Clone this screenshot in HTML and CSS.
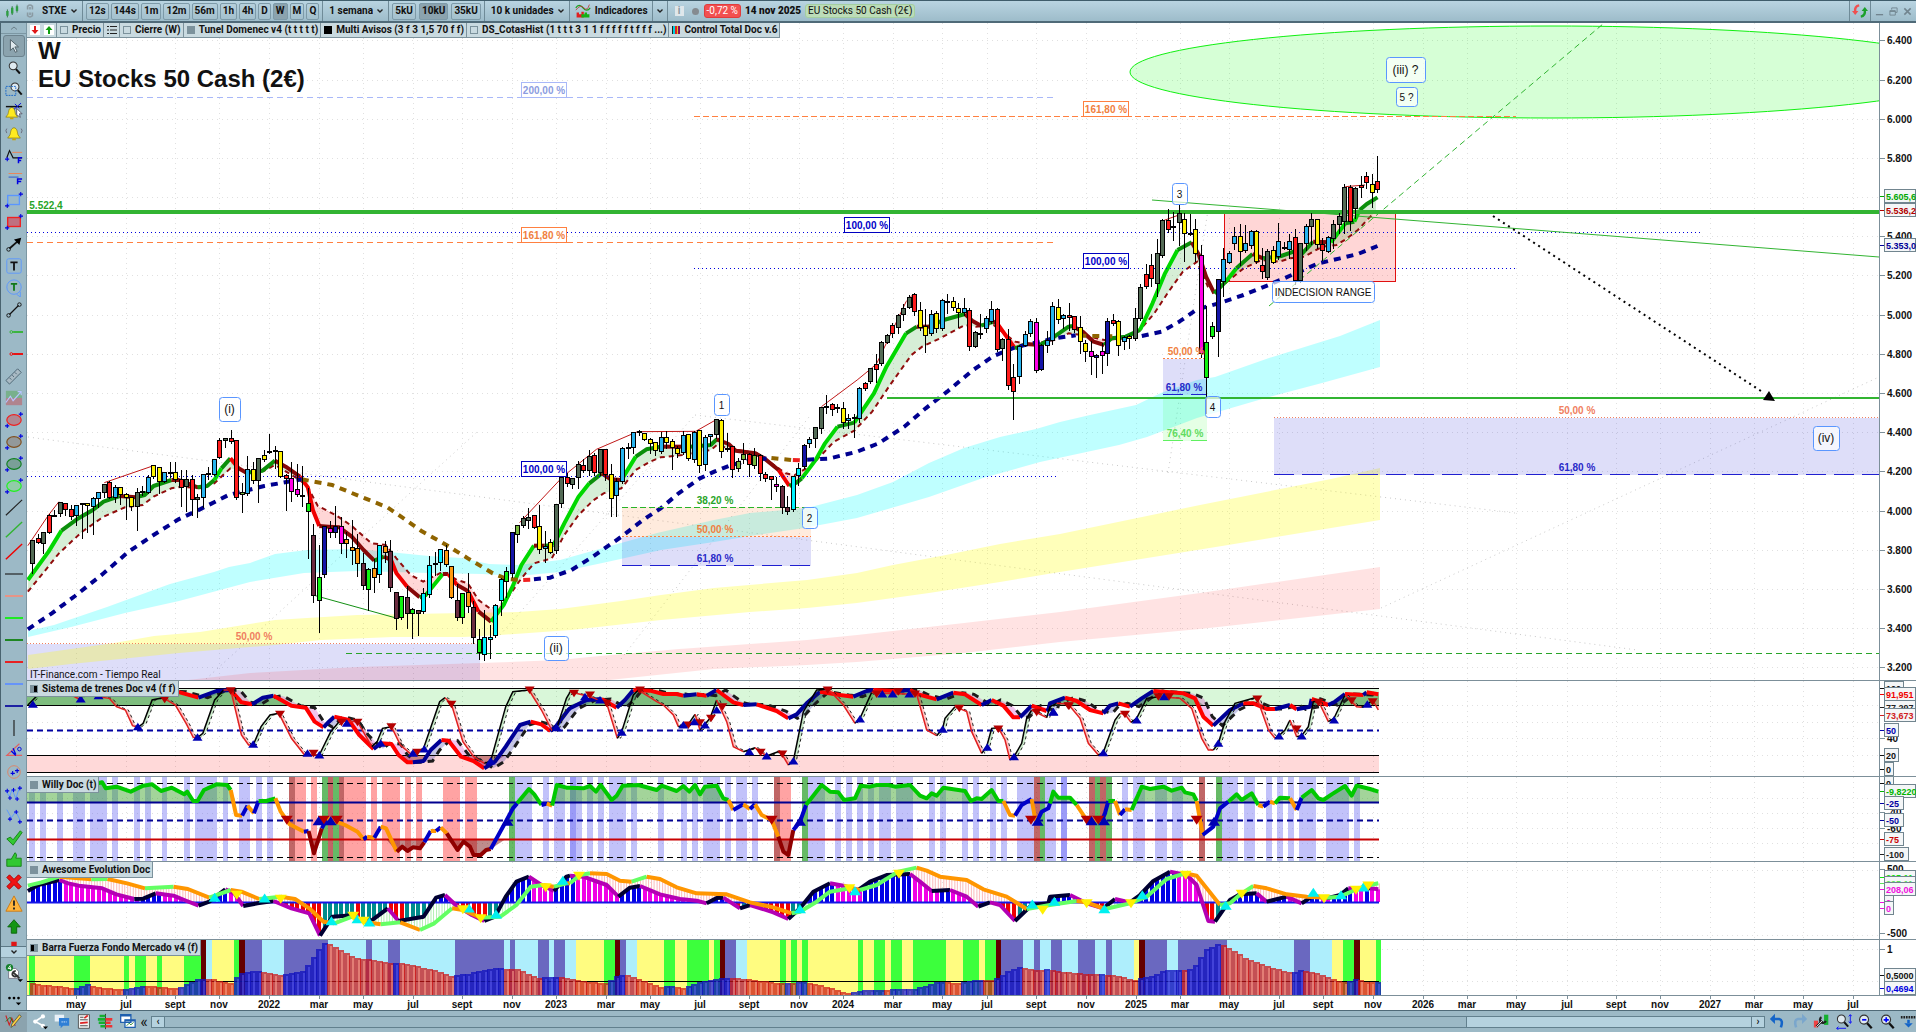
FILE: index.html
```html
<!DOCTYPE html>
<html lang="es">
<head>
  <meta charset="UTF-8">
  <meta name="viewport" content="width=device-width, initial-scale=1.0">
  <title>EU Stocks 50 Cash (2€)</title>
  <link rel="stylesheet" href="styles.css">
</head>
<body>
  <svg class="defs" aria-hidden="true">
    <symbol id="chev" viewBox="0 0 8 8"><path d="M1.5 2.5L4 5L6.5 2.5" fill="none" stroke="#222" stroke-width="1.4"/></symbol>
    <symbol id="plus" viewBox="0 0 5 5"><path d="M2.5 0V5M0 2.5H5" stroke="#0000e0" stroke-width="1.2"/></symbol>
    <symbol id="bell" viewBox="0 0 16 16"><path d="M8 1C4 2 4.500 6 3.500 9L1 12.500H15L12.500 9C11.500 6 12 2 8 1Z" fill="#ffea20" stroke="#8a7a10" stroke-width=".8"/><path d="M6 13H10V15H6Z" fill="#c9a400"/></symbol>
    <symbol id="glass" viewBox="0 0 16 16"><path d="M9.500 9.500L14.500 15" stroke="#111" stroke-width="2.400"/><circle cx="6.500" cy="6" r="4.700" fill="#dfeaf0" stroke="#333" stroke-width="1.200"/></symbol>
  </svg>

  <header class="toolbar">
    <svg class="icon logo" viewBox="0 0 20 20"><path d="M3 8V18M9 4V15M15 2V12" stroke="#1c6b2c"/><path d="M1.500 10H4.500V16H1.500ZM7.500 6H10.500V13H7.500ZM13.500 4H16.500V10H13.500Z" fill="#2f9e44"/></svg>
    <svg class="icon link" viewBox="0 0 12 20"><path d="M3 8V4Q6 1 9 4V8M3 12V16Q6 19 9 16V12M6 5V8M6 12V15" fill="none" stroke="#8a9aa2" stroke-width="2"/></svg>
    <label class="drop symbol"><select aria-label="Valor"><option>STXE</option></select><svg class="chev"><use href="#chev"/></svg></label>
    <div class="group frames">
      <button>12s</button><button>144s</button><button>1m</button><button>12m</button><button>56m</button><button>1h</button><button>4h</button><button>D</button><button class="on">W</button><button>M</button><button>Q</button>
    </div>
    <label class="drop"><select aria-label="Periodo"><option>1 semana</option></select><svg class="chev"><use href="#chev"/></svg></label>
    <div class="group"><button>5kU</button><button class="on">10kU</button><button>35kU</button></div>
    <label class="drop"><select aria-label="Unidades"><option>10 k unidades</option></select><svg class="chev"><use href="#chev"/></svg></label>
    <button class="flat indicators">
      <svg class="icon" viewBox="0 0 20 20"><path d="M1 6Q5 0 10 6T19 6" fill="none" stroke="#18a018" stroke-width="1.500"/><path d="M1 9Q7 1 11 6T18 2" fill="none" stroke="#c03030"/><path d="M2 18V12H5V14H8V11H11V18Z" fill="#e02020"/><path d="M8 18V14H12V12H15V14H18V18Z" fill="#14b014"/></svg>
      Indicadores
    </button>
    <button class="flat caret" aria-label="Más indicadores"><svg class="chev"><use href="#chev"/></svg></button>
    <div class="quote">
      <span class="info">i</span><span class="dot"></span>
      <span class="change">-0,72 %</span>
      <b>14 nov 2025</b>
      <span class="name">EU Stocks 50 Cash (2€)</span>
    </div>
    <button class="flat refresh" aria-label="Actualizar"><svg class="icon" viewBox="0 0 20 20"><path d="M9 3Q3 4 4 11" fill="none" stroke="#f05050" stroke-width="3"/><path d="M0 10H8L4 15Z" fill="#f05050"/><path d="M11 17Q17 16 16 9" fill="none" stroke="#1ca02c" stroke-width="3"/><path d="M12 10H20L16 5Z" fill="#1ca02c"/></svg></button>
    <div class="window">
      <button class="flat" aria-label="Minimizar"><svg viewBox="0 0 10 10"><path d="M1 8.500H9" stroke="#71848e" stroke-width="1.500"/></svg></button>
      <button class="flat" aria-label="Restaurar"><svg viewBox="0 0 10 10"><path d="M3 3V1H9V6H7M1 4H7V9H1ZM1 5H7" fill="none" stroke="#71848e"/></svg></button>
      <button class="flat" aria-label="Cerrar"><svg viewBox="0 0 10 10"><path d="M1.500 1.500L8.500 8.500M8.500 1.500L1.500 8.500" stroke="#71848e" stroke-width="1.700"/></svg></button>
    </div>
  </header>

  <main class="workspace">
    <nav class="tools" aria-label="Herramientas">
      <button class="scroll" aria-label="Subir"><svg viewBox="0 0 8 8"><path d="M1 5.500L4 3L7 5.500" fill="none" stroke="#6c808a"/></svg></button>
      <div class="tool-list" id="tools"></div>
      <button class="scroll down" aria-label="Bajar"><svg viewBox="0 0 8 8"><path d="M1.500 2.500L4 5L6.500 2.500" fill="none" stroke="#222" stroke-width="1.400"/></svg></button>
      <button class="tool big" aria-label="Configurar"><svg viewBox="0 0 20 20"><path d="M4 5H12L15 8V16H4Z" fill="#fff" stroke="#778"/><path d="M9 9L16 16M12 8A3 3 0 1 0 14 12" stroke="#333" fill="none" stroke-width="2"/><circle cx="5" cy="4" r="4" fill="#14802c"/><path d="M6 1.500L3.500 5H7M6 3V6.500" stroke="#fff" fill="none"/><path d="M14 17H20L17 20Z"/></svg></button>
      <button class="tool" aria-label="Más"><svg viewBox="0 0 20 20"><circle cx="5" cy="9" r="1.500"/><circle cx="10" cy="9" r="1.500"/><circle cx="15" cy="9" r="1.500"/><path d="M12 14H18L15 17Z"/></svg></button>
    </nav>

    <section class="charts">
      <div class="panel main">
        <svg class="plot" id="price"></svg><svg class="axis" id="price-axis"></svg>
        <div class="legend">
          <span class="tag arrows">
            <svg viewBox="0 0 10 10"><path d="M0 0H10V10H0Z" fill="#fff"/><path d="M4 1H6V5H8.500L5 9L1.500 5H4Z" fill="#e01818"/></svg>
            <svg viewBox="0 0 10 10"><path d="M0 0H10V10H0Z" fill="#fff"/><path d="M4 9H6V5H8.500L5 1L1.500 5H4Z" fill="#10a010"/></svg>
          </span>
          <span class="tag"><i class="box"></i>Precio</span>
          <span class="tag list"><svg viewBox="0 0 10 10"><path d="M0 1.500H2M0 5H2M0 8.500H2M3 1.500H10M3 5H10M3 8.500H10" stroke="#222" stroke-width="1.200"/></svg></span>
          <span class="tag"><i class="box"></i>Cierre (W)</span>
          <span class="tag"><i class="box grey"></i>Tunel Domenec v4 (t t t t t)</span>
          <span class="tag"><i class="box black"></i>Multi Avisos (3 f 3 1,5 70 f f)</span>
          <span class="tag"><i class="box"></i>DS_CotasHist (1 t t t 3 1 1 f f f f f t f f f ...)</span>
          <span class="tag"><i class="box multi"></i>Control Total Doc v.6</span>
        </div>
        <h1>W<br>EU Stocks 50 Cash (2€)</h1>
        <small>IT-Finance.com - Tiempo Real</small>
      </div>
      <div class="panel trains">
        <svg class="plot" id="trains"></svg><svg class="axis" id="trains-axis"></svg>
        <div class="legend"><span class="tag"><i class="box half"></i>Sistema de trenes Doc v4 (f f)</span></div>
      </div>
      <div class="panel willy">
        <svg class="plot" id="willy"></svg><svg class="axis" id="willy-axis"></svg>
        <div class="legend"><span class="tag"><i class="box grey"></i>Willy Doc (t)</span></div>
      </div>
      <div class="panel awesome">
        <svg class="plot" id="awesome"></svg><svg class="axis" id="awesome-axis"></svg>
        <div class="legend"><span class="tag"><i class="box grey"></i>Awesome Evolution Doc</span></div>
      </div>
      <div class="panel force">
        <svg class="plot" id="force"></svg><svg class="axis" id="force-axis"></svg>
        <div class="legend"><span class="tag"><i class="box half flip"></i>Barra Fuerza Fondo Mercado v4 (f)</span></div>
      </div>
      <svg class="months" id="months"></svg>
    </section>
  </main>

  <footer class="bottom">
    <button class="pencil" aria-label="Dibujar"><svg viewBox="0 0 20 20"><path d="M1 3L5 14L8 6L12 15" fill="none" stroke="#c22" stroke-width="1.300"/><path d="M1 10L6 5L10 12" fill="none" stroke="#171" /><path d="M17 2L19 4L10 15L7 17L8 13Z" fill="#ffcf40" stroke="#554"/></svg></button>
    <button aria-label="Compartir"><svg viewBox="0 0 20 20"><path d="M14 4L5 10L14 15" fill="none" stroke="#fff" stroke-width="2"/><circle cx="14" cy="4" r="2.500" fill="#fff"/><circle cx="5" cy="10" r="2.500" fill="#fff"/><circle cx="14" cy="15" r="2.500" fill="#fff"/><path d="M14 16H20L17 19Z"/></svg></button>
    <button aria-label="Chat"><svg viewBox="0 0 20 20"><path d="M2 2H13V10H2Z" fill="#e9f1f8"/><path d="M7 6H19V15H12L9 18V15H7Z" fill="#2f7fd6"/><path d="M10 10.500H16" stroke="#fff" stroke-dasharray="1.500 1"/></svg></button>
    <button aria-label="Informe"><svg viewBox="0 0 20 20"><path d="M4 2H17V18H4Z" fill="#f4f4f4" stroke="#444"/><path d="M6 5H10M6 8H15M6 15H15" stroke="#333"/><path d="M11 6L15 3M6 12L15 11" stroke="#d22" stroke-width="2"/></svg></button>
    <button aria-label="Órdenes"><svg viewBox="0 0 20 20"><path d="M10 1V19" stroke="#222"/><path d="M3 2H10V5H3ZM1 6H10V9H1ZM4 14H10V17H4ZM2 10H10V13H2Z" fill="#14b030"/><path d="M10 6H18V9H10ZM10 10H16V13H10ZM10 14H18V17H10Z" fill="#e33"/></svg></button>
    <button aria-label="Ventanas"><svg viewBox="0 0 20 20"><path d="M2 2H14V11H2ZM7 8H19V17H7Z" fill="#fff" stroke="#1f5fae" stroke-width="1.500"/><path d="M2 3H14M7 9H19" stroke="#1f5fae" stroke-width="2"/><path d="M9 15L12 12L14 14L17 11" fill="none" stroke="#171"/></svg></button>
    <button class="text">«</button>
    <div class="scrollbar">
      <button aria-label="Izquierda">‹</button>
      <div class="track"><div class="thumb"></div></div>
      <button aria-label="Derecha">›</button>
    </div>
    <button aria-label="Deshacer"><svg viewBox="0 0 20 20"><path d="M5 7H12Q17 8 14 17" fill="none" stroke="#1464c8" stroke-width="3"/><path d="M7 1V13L1 7Z" fill="#1464c8"/></svg></button>
    <button aria-label="Rehacer"><svg viewBox="0 0 20 20"><path d="M15 7H8Q3 8 6 17" fill="none" stroke="#7aa6cc" stroke-width="3"/><path d="M13 1V13L19 7Z" fill="#7aa6cc"/></svg></button>
    <button aria-label="Ajustes"><svg viewBox="0 0 20 20"><path d="M1 9H6V17H1Z" fill="#e44"/><path d="M13 2H18V14H13Z" fill="#14b030"/><path d="M4 16L11 9M10 5A3.500 3.500 0 1 0 15 9" fill="none" stroke="#222" stroke-width="2.500"/><path d="M4 16L11 9" stroke="#fff"/></svg></button>
    <button aria-label="Escala"><svg viewBox="0 0 20 20"><use href="#glass" x="1" y="1" width="16" height="16"/><path d="M2 18H13M18 2V12M2 18L4 16M2 18L4 20M18 2L16 4M18 2L20 4M18 12L16 10M18 12L20 10" fill="none" stroke="#00f"/></svg></button>
    <button aria-label="Alejar"><svg viewBox="0 0 20 20"><use href="#glass" x="1" y="1" width="18" height="18"/><path d="M6 8H11" stroke="#00f" stroke-width="2"/></svg></button>
    <button aria-label="Acercar"><svg viewBox="0 0 20 20"><use href="#glass" x="1" y="1" width="18" height="18"/><path d="M5.500 8H11.500M8.500 5V11" stroke="#00f" stroke-width="2"/></svg></button>
    <button class="last" aria-label="Anclar"><svg viewBox="0 0 20 20"><path d="M1 5H19" stroke="#222" stroke-width="3" stroke-dasharray="2 1"/><path d="M10 8V12" stroke="#1464c8" stroke-width="3"/><path d="M5 12H15L10 17Z" fill="#1464c8"/></svg></button>
  </footer>
  <script src="chart.js"></script>
</body>
</html>
```

FILE: styles.css
```css
* {
  box-sizing: border-box;
}

body {
  margin: 0;
  height: 100vh;
  display: flex;
  flex-direction: column;
  overflow: hidden;
  background: #fff;
  color: #111;
  font: bold 10px/12px Roboto, "Liberation Sans", Arial, sans-serif;
}

button, select {
  margin: 0;
  padding: 0;
  border: 0;
  background: none;
  color: inherit;
  font: inherit;
}

svg {
  display: block;
}

.defs {
  display: none;
}

/* top bar */
.toolbar {
  display: flex;
  flex: none;
  height: 23px;
  align-items: stretch;
  border-top: 1px solid #3f5d6b;
  border-bottom: 2px solid #4f6a78;
  background: linear-gradient(#b9d4e1, #9dbcca);
  white-space: nowrap;
}

.icon {
  width: 16px;
  height: 16px;
}

.logo {
  margin: 2px 0 0 5px;
}

.link {
  width: 10px;
  margin: 2px 5px 0 4px;
}

.chev {
  width: 8px;
  height: 8px;
}

.drop {
  position: relative;
  display: flex;
  align-items: center;
  gap: 3px;
  padding: 0 4px 0 6px;
  border-right: 1px solid #6f8b98;
}

.symbol {
  padding-left: 2px;
}

.drop select {
  appearance: none;
}

.group {
  display: flex;
  align-items: center;
  gap: 3px;
  padding: 0 3px;
  border-right: 1px solid #6f8b98;
}

.group button {
  height: 17px;
  padding: 0 2px;
  border: 1px solid #7d9aa8;
  border-radius: 2px;
  background: linear-gradient(#b6d0dc, #a3c0cd);
}

.frames {
  gap: 2px;
}

.group .on {
  background: #8ba3ae;
}

.flat {
  display: flex;
  align-items: center;
}

.indicators {
  gap: 4px;
  padding: 0 4px 0 5px;
  border-right: 1px solid #6f8b98;
}

.caret {
  padding: 0 3px;
  border-right: 1px solid #6f8b98;
}

.quote {
  display: flex;
  flex: 1;
  align-items: center;
  gap: 4px;
  padding-left: 7px;
}

.info {
  width: 9px;
  height: 10px;
  background: #dfe7eb;
  color: #8a979e;
  line-height: 10px;
  text-align: center;
}

.dot {
  width: 7px;
  height: 7px;
  margin: 0 1px 0 4px;
  border-radius: 50%;
  background: #858b90;
}

.change, .name {
  padding: 0 2px;
  border-radius: 3px;
  font-weight: normal;
}

.change {
  border: 1px solid #e03c3c;
  background: #f25050;
  color: #fff;
}

.name {
  border: 1px solid #a4cfa0;
  background: #bcdcb8;
}

.refresh {
  padding: 0 2px;
  border: solid #6f8b98;
  border-width: 0 1px;
}

.window {
  display: flex;
  align-items: center;
  gap: 5px;
  padding: 0 4px;
}

.window svg {
  width: 9px;
  height: 9px;
}

/* drawing tools */
.workspace {
  display: flex;
  flex: 1;
  min-height: 0;
}

.tools {
  display: flex;
  flex: none;
  flex-direction: column;
  align-items: center;
  width: 27px;
  overflow: hidden;
  border-left: 1px solid #49636f;
  border-right: 1px solid #7c97a3;
  background: #9cb9c6;
}

.scroll {
  display: grid;
  flex: none;
  place-items: center;
  width: 100%;
  height: 11px;
  border-bottom: 1px solid #7c97a3;
}

.scroll svg {
  width: 8px;
  height: 8px;
}

.down {
  height: 12px;
  border-top: 1px solid #5d7986;
  background: #b5d2df;
}

.tool-list {
  flex: 1;
  min-height: 0;
  padding-top: 1px;
  overflow: hidden;
}

.tool {
  display: grid;
  flex: none;
  place-items: center;
  width: 22px;
  height: 22px;
  border-radius: 3px;
}

.tool svg {
  width: 18px;
  height: 18px;
}

.tool:first-child {
  border: 1px solid #6c828d;
  background: #8ba3ae;
}

.big {
  height: 30px;
}

/* chart panels */
.charts {
  display: flex;
  flex: 1;
  flex-direction: column;
  min-width: 0;
}

.panel {
  position: relative;
  display: grid;
  grid-template-columns: 1fr 37px;
  flex: none;
  border-bottom: 1px solid #7c8f99;
}

.main {
  flex: 1;
  min-height: 0;
}

.trains {
  height: 96px;
}

.willy {
  height: 85px;
}

.awesome {
  height: 78px;
}

.force {
  height: 56px;
}

.plot, .axis {
  width: 100%;
  height: 100%;
  min-height: 0;
}

.axis {
  border-left: 1px solid #7c8f99;
}

.months {
  flex: none;
  width: 100%;
  height: 14px;
}

.legend {
  position: absolute;
  top: 0;
  left: 0;
  display: flex;
}

.tag {
  display: flex;
  align-items: center;
  gap: 4px;
  height: 16px;
  padding: 0 2px 0 3px;
  border: solid #7c929c;
  border-width: 0 1px 1px 0;
  background: #c9dae0;
  white-space: nowrap;
}

.main .tag {
  height: 15px;
}

.tag svg {
  width: 10px;
  height: 10px;
}

.box {
  width: 8px;
  height: 8px;
  border: 1px solid #7c929c;
}

.grey {
  background: #7c929c;
}

.black {
  border-color: #000;
  background: #000;
}

.half {
  background: linear-gradient(90deg, #7c929c 50%, #000 50%);
}

.flip {
  background: linear-gradient(90deg, #000 50%, #7c929c 50%);
}

.multi {
  border: 0;
  background: linear-gradient(90deg, #222 15%, #00d0e0 15% 35%, #e02020 35% 60%, #e0c020 60% 75%, #801060 75%);
}

.main h1 {
  position: absolute;
  top: 14px;
  left: 11px;
  margin: 0;
  font: bold 24px/28px "Liberation Sans", Arial, sans-serif;
}

.main small {
  position: absolute;
  bottom: 0;
  left: 3px;
  font-size: 10px;
  font-weight: normal;
  line-height: 10px;
}

/* bottom bar */
.bottom {
  display: flex;
  flex: none;
  height: 22px;
  align-items: center;
  gap: 3px;
  border-top: 1px solid #4f6a78;
  background: #9cb9c6;
}

.bottom > button {
  display: grid;
  place-items: center;
  width: 19px;
  height: 20px;
}

.bottom > .pencil {
  width: 27px;
  background: #8ba3ae;
}

.bottom > .last {
  width: 16px;
}

.bottom svg {
  width: 17px;
  height: 17px;
}

.bottom > .text {
  width: 8px;
  font-size: 16px;
  font-weight: normal;
}

.scrollbar {
  display: flex;
  flex: 1;
  height: 12px;
  border: 1px solid #62808e;
}

.scrollbar button {
  width: 12px;
  background: #b5d2df;
  line-height: 10px;
}

.track {
  display: flex;
  flex: 1;
  justify-content: flex-end;
  border: solid #62808e;
  border-width: 0 1px;
}

.thumb {
  width: 18%;
  border-left: 1px solid #62808e;
  background: #b5d2df;
}

/* svg text */
text {
  fill: #111;
  font: bold 10px "Liberation Sans", Arial, sans-serif;
}

.value {
  font-size: 9px;
}

.fib {
  text-anchor: middle;
}

.note {
  font-weight: normal;
  text-anchor: middle;
}

.wave {
  font-size: 12px;
}
```

FILE: chart.js
```js
const NS = 'http://www.w3.org/2000/svg';
const FAR = 6000;      // past the right edge of any window
const STEP = 5.514;    // width of one week
const FIRST = 32.5;
const LAST = 1379;

function add(parent, tag, attrs, text) {
  const node = document.createElementNS(NS, tag);
  for (const key in attrs) node.setAttribute(key, attrs[key]);
  if (text !== undefined) node.textContent = text;
  parent.appendChild(node);
  return node;
}

// Series are stored in blocks: x start, y start, x units and y units per pixel
const BLOCKS = {
  a: [0, 400, 2.8, 3], b: [500, 380, 2.8, 3], c: [840, 180, 2.8, 3],
  d: [20, 675, 2.8, 3], e: [570, 675, 3, 3], f: [1050, 675, 3, 3]
};

function pts(block, str) {
  const [x0, y0, kx, ky] = BLOCKS[block];
  return str.trim().split(/\s+/).map(p => {
    const [x, y] = p.split(',').map(Number);
    return [x0 + x / kx, y0 + y / ky];
  });
}

function series(obj) {
  return Object.keys(obj).flatMap(k => pts(k, obj[k])).sort((p, q) => p[0] - q[0]);
}

function at(list, x) {
  if (x <= list[0][0]) return list[0][1];
  for (let i = 1; i < list.length; i++) {
    const [x1, y1] = list[i - 1], [x2, y2] = list[i];
    if (x <= x2) return x2 === x1 ? y2 : y1 + (y2 - y1) * (x - x1) / (x2 - x1);
  }
  return list[list.length - 1][1];
}

function layer(id, top) {
  return add(document.getElementById(id), 'g', { transform: `translate(-27,-${top})` });
}

function poly(g, list, color, width, extra) {
  return add(g, 'polyline', { points: list.map(p => p.join()).join(' '), fill: 'none', stroke: color, 'stroke-width': width, ...extra });
}

function hline(g, y, x1, x2, color, width, dash) {
  add(g, 'line', { x1, x2, y1: y, y2: y, stroke: color, 'stroke-width': width || 1, 'stroke-dasharray': dash || 'none', 'shape-rendering': width > 1 ? 'auto' : 'crispEdges' });
}

function line(g, x1, y1, x2, y2, color, dash, width) {
  add(g, 'line', { x1, y1, x2, y2, stroke: color, 'stroke-width': width || 1, 'stroke-dasharray': dash || 'none' });
}

function rect(g, x, y, width, height, fill, extra) {
  add(g, 'rect', { x, y, width, height, fill, ...extra });
}

// Draws runs of equal colour as one line each
function coloured(g, list, pick, width, extra) {
  let run = [list[0]], color = null;
  for (let i = 1; i < list.length; i++) {
    const c = pick(list[i - 1], list[i]);
    if (color && c !== color) {
      poly(g, run, color, width, extra);
      run = [list[i - 1]];
    }
    color = c;
    run.push(list[i]);
  }
  poly(g, run, color, width, extra);
}

function cloud(g, a, b, above, below, from, to) {
  let run = [], sign = 0;
  const flush = () => {
    if (run.length > 1) {
      const shape = run.map(p => `${p[0]},${p[1]}`).concat(run.slice().reverse().map(p => `${p[0]},${p[2]}`));
      add(g, 'polygon', { points: shape.join(' '), fill: sign < 0 ? above : below });
    }
  };
  for (let x = from; x <= to; x += 2) {
    const ya = at(a, x), yb = at(b, x), s = ya < yb ? -1 : 1;
    if (s !== sign) {
      flush();
      run = [];
      sign = s;
    }
    run.push([x, ya, yb]);
  }
  flush();
}

function triangles(g, block, dir, color, size, str) {
  pts(block, str).forEach(([x, y]) => {
    const h = size * dir;
    add(g, 'path', { d: `M${x - size} ${y + h * .7}H${x + size}L${x} ${y - h * .8}Z`, fill: color });
  });
}

function bands(g, block, top, height, color, str) {
  const [x0, , k] = BLOCKS[block];
  str.split(' ').forEach(s => {
    const [a, b] = s.split('-').map(Number);
    rect(g, Math.round(x0 + a / k), top, Math.round((b - a) / k), height, color);
  });
}

const MONTHS = [[76, 'may'], [126, 'jul'], [175, 'sept'], [219, 'nov'], [269, '2022'], [319, 'mar'], [363, 'may'], [413, 'jul'], [462, 'sept'], [512, 'nov'], [556, '2023'], [606, 'mar'], [650, 'may'], [700, 'jul'], [749, 'sept'], [799, 'nov'], [843, '2024'], [893, 'mar'], [942, 'may'], [987, 'jul'], [1036, 'sept'], [1086, 'nov'], [1136, '2025'], [1180, 'mar'], [1229, 'may'], [1279, 'jul'], [1323, 'sept'], [1373, 'nov'], [1423, '2026'], [1467, 'mar'], [1516, 'may'], [1567, 'jul'], [1616, 'sept'], [1660, 'nov'], [1710, '2027'], [1754, 'mar'], [1803, 'may'], [1853, 'jul']];

function grid(g, rows, top, bottom) {
  MONTHS.forEach(([x]) => add(g, 'line', { x1: x + .5, x2: x + .5, y1: top, y2: bottom, stroke: '#e0e0e0', 'stroke-dasharray': '1 4' }));
  rows.forEach(y => hline(g, y + .5, 27, FAR, '#e0e0e0', 1, '1 4'));
}

function axis(id, top, labels) {
  const g = add(document.getElementById(id), 'g', { transform: `translate(0,-${top})` });
  labels.forEach(([y, text, color, boxed]) => {
    hline(g, y + .5, 0, 5, boxed ? color : '#7c8f99');
    if (boxed) rect(g, 4.5, y - 6.5, Math.min(text.length * 5 + 4, 31), 13, '#f4f6f7', { stroke: '#71858f' });
    add(g, 'text', { class: boxed ? 'value' : 'tick', x: boxed ? 6 : 7, y: y + 4, style: `fill:${color || '#111'}` }, text);
  });
}

/* ---------- price ---------- */
const CANDLE = { g: '#546b56', r: '#ff1c1c', b: '#29b4ee', y: '#fff200', k: '#000', m: '#ff00e6', n: '#1414a8', l: '#10f010', o: '#ff9a10', w: '#6b2c40', c: '#00f2ff', v: '#78b83c' };
// body top, body bottom, high, low for each week
const WEEKS = [
  ['a', 'g420,490,420,520 r415,427,400,430 g397,430,392,460 r346,397,340,400 k345,347,328,348 g307,340,305,348 r310,328,308,345 r328,349,312,358 b314,346,311,375 k308,310,305,415 y310,314,305,397 b295,318,288,402 b276,295,273,322 g251,275,248,290 r246,292,240,295 b260,290,253,305 y260,282,258,313 y283,290,275,356 y290,318,288,330 g275,318,260,390 k272,275,256,285 b230,275,222,280 y196,229,192,235 y200,243,198,280 b216,244,214,247 k215,218,183,230 y217,236,184,245 r236,262,206,318 g238,258,206,334 r236,298,222,345 g290,297,280,352 b223,290,221,322 k218,222,198,238 b176,223,174,225 r120,172,112,174 g114,120,110,140 r113,122,88,130 r120,292,118,297 v275,283,245,335 b208,280,166,285 y208,240,183,250 g175,241,170,307 y166,178,146,182 b152,156,100,160 k150,153,135,205 y152,227,150,230 r226,235,220,330 m235,274,182,302 m268,283,190,288 k285,288,195,318 l308,333,260,475 w406,586,368,607 l532,600,432,695 n378,522,374,530 m384,396,360,410 n377,397,316,410 m377,428,348,458 o416,430,392,470 o442,450,358,492 o445,490,400,527 w488,556,455,568 l508,568,502,630 o505,531,473,577 c436,523,432,545 o437,457,420,487 w454,562,418,573 w577,655,573,686 l588,652,585,656 w590,640,555,683 l628,640,620,713 w631,639,627,704 c580,634,560,640 c494,583,465,590 k488,492,453,525 c448,487,445,510 o449,493,433,497 o499,592,495,595 w600,650,548,660 l580,652,576,668 o577,619,516,637 w622,712,600,728 l718,757,685,777 c710,761,628,780 c712,717,672,774 c614,706,610,710 c538,601,530,645 l512,544,498,592 n397,520,392,530 v376,402,372,425 g355,374,345,380 g352,360,320,385 r346,382,342,385'],
  ['b', 'y438,507,372,518 b497,503,450,545 y487,516,475,520 g373,511,370,520 g290,370,285,380 r291,310,275,318 g293,313,290,325 g252,292,240,323 r256,271,235,275 g227,271,208,285 r225,275,215,285 g206,277,203,285 r208,282,204,300 y283,355,250,408 b302,346,290,408 b203,303,198,310 y200,205,186,235 b157,200,153,220 k153,156,148,165 y159,178,155,180 y178,190,172,220 y187,210,182,225 b170,212,152,220 y170,186,150,205 y182,200,173,268 y203,220,195,230 b166,217,150,222 y163,235,160,240 b155,236,150,245 y151,254,146,277 b170,252,163,270 b163,168,160,195 g118,163,114,175 y119,214,115,230 b203,208,157,213 r197,268,195,290 v242,265,232,272 v223,237,187,250 r221,253,215,287 v224,255,200,263 r225,280,220,300 r282,295,272,303 r288,296,285,358 m313,318,288,332 w317,380,313,400 w380,394,345,402 c287,388,285,392 c263,285,245,315 n194,259,188,265 b176,190,168,200 g140,175,138,200 g82,143,78,160 r77,82,42,98 r73,88,66,105 k82,85,68,97 y83,125,62,143 b113,120,100,145 k112,115,100,170 b23,113,18,125 r8,23,4,30'],
  ['c', 'g565,604,560,610 r553,566,520,605 g485,550,480,555 g464,485,460,490 r436,460,425,470 g405,440,398,460 g385,402,370,420 g352,381,343,385 r343,394,335,405 y391,442,362,450 y437,466,385,515 b401,460,388,465 y398,445,390,455 b361,445,355,450 y362,366,338,400 y364,382,348,390 y383,396,365,440 b383,395,350,405 r391,498,382,510 g457,498,450,502 k459,461,398,475 b415,443,405,455 b388,424,360,428 r386,507,382,512 g478,505,470,540 r476,616,445,628 r590,633,550,716 b497,588,492,608 b463,495,450,498 b424,460,415,468 m425,570,410,575 n496,567,490,570 b481,496,450,515 b379,481,363,492 y380,417,355,430 b406,414,400,445 r406,410,367,450 r409,447,405,455 y440,484,405,520 y490,513,478,543 m512,528,480,583 n524,530,518,590 m514,526,487,578 n422,520,410,555 r421,428,398,435 y424,495,418,525 b470,482,465,508 y467,475,462,505 g415,475,382,480 g320,414,310,420 r283,319,250,325 r256,295,218,317 g220,310,175,348 g121,225,115,230 r121,147,83,155 k137,140,92,180 g100,125,72,195 y118,160,95,243 k160,162,100,165 y148,219,113,243 m225,520,192,530 l485,592,375,700 l438,468,422,475 n297,454,293,528 b237,303,200,348 b219,245,210,250 b167,190,138,207 y169,212,130,255 b190,210,132,215 b154,195,148,205 y152,243,148,248 r256,273,200,295 g212,292,205,298 y209,247,195,250 b184,228,127,238 y200,205,182,208 b184,207,158,233 r172,300,143,313 g190,300,187,305 b139,190,128,210 g118,137,97,193 y118,192,115,205 r193,210,170,240 b172,213,165,215 g132,173,118,205 g107,133,95,160 g22,122,10,160 r20,124,12,150 g25,85,18,115 r14,20,-15,52 r-12,5,-28,25 y12,37,-20,80 r2,28,-75,35']
];

const EMA = series({
  a: '78,540 136,455 172,392 215,358 260,330 290,305 335,288 380,292 405,285 430,258 480,240 500,240 525,250 553,262 580,258 600,240 620,205 645,175 668,205 690,218 735,212 770,182 800,200 840,230 862,262 876,330 894,378 920,380 950,382 985,410 1018,450 1048,482 1075,470 1095,480 1110,520 1140,560 1175,592 1190,588 1215,555 1240,522 1255,522 1280,555 1310,573 1340,635 1375,665',
  b: '10,675 35,620 60,555 95,497 125,497 150,495 180,430 220,350 250,310 285,280 310,298 340,300 360,265 380,230 410,208 450,200 490,200 530,200 590,195 607,178 640,192 660,212 715,220 740,235 780,270 810,318 830,308 845,295 885,238 910,190 945,140',
  c: '40,728 95,640 130,560 185,460 215,440 250,440 290,420 350,402 370,422 395,437 430,425 440,430 470,475 490,505 520,492 560,495 600,470 640,440 650,438 680,455 710,485 740,495 760,475 800,470 840,450 875,370 910,280 945,210 985,187 1005,225 1025,290 1048,340 1080,305 1110,265 1155,222 1185,235 1235,228 1270,215 1290,225 1325,185 1375,187 1415,130 1440,125 1455,90 1475,72 1505,52'
});
const SIGNAL = series({
  a: '78,575 120,520 165,460 230,395 290,350 350,322 400,315 430,290 480,265 510,260 560,265 600,250 645,205 690,218 740,212 770,195 840,240 862,262 890,318 940,345 985,378 1040,430 1080,435 1110,475 1150,525 1185,545 1240,515 1280,540 1310,550 1340,600 1375,628 1410,610',
  b: '60,595 95,550 145,535 180,465 220,405 260,362 290,340 340,325 380,270 420,245 450,232 510,225 590,210 607,195 640,205 720,220 760,250 800,280 825,285 870,258 900,225 935,185',
  c: '40,752 90,695 140,615 200,525 230,500 280,475 350,435 380,440 430,435 490,485 530,492 560,487 600,480 640,460 680,465 740,480 800,475 840,450 880,400 920,335 960,275 1000,245 1030,320 1050,335 1090,300 1130,265 1180,240 1230,245 1260,235 1300,230 1350,200 1390,195 1420,175 1450,150 1480,115 1500,95'
});

function drawPrice() {
  const g = layer('price', 23);
  const rows = [40, 80, 119, 158, 197, 236, 275, 315, 354, 393, 432, 471, 511, 550, 589, 628, 667];
  grid(g, rows, 23, 681);
  const dim = 'rgba(120,120,120,.4)';
  [[28, 437, 1637, 650], [695, 415, 1515, 513], [206, 679, 477, 432], [500, 635, 695, 415], [621, 659, 809, 417], [1168, 473, 1208, 210], [1381, 608, 1879, 377]]
    .forEach(l => line(g, ...l, dim, '1 4'));

  // zones
  add(g, 'ellipse', { cx: 1551, cy: 72, rx: 421, ry: 46, fill: 'rgba(0,255,0,.16)', stroke: '#10f010', 'stroke-width': 1 });
  rect(g, 27, 644, 453, 36, 'rgba(60,60,220,.17)');
  add(g, 'polygon', { fill: 'rgba(0,255,255,.25)', points: '28,631 54,625 107,607 170,584 214,572 229,567 250,563 275,554 307,550 357,549 389,552 429,556 461,558 489,564 518,565 560,560 621,543 657,533 714,520 750,513 807,508 857,495 893,482 929,463 964,448 1000,437 1036,429 1060,422 1090,415 1136,405 1161,393 1197,380 1215,377 1269,358 1340,336 1380,320 1380,367 1322,383 1269,397 1197,418 1147,437 1119,445 1040,462 983,478 929,497 857,518 804,528 750,536 714,542 661,550 607,562 560,572 518,576 482,574 429,573 357,571 304,573 250,582 179,601 125,613 71,627 28,637' });
  add(g, 'polygon', { fill: 'rgba(255,255,0,.27)', points: '28,655 71,649 114,643 154,636 200,632 275,620 307,618 357,615 464,613 518,612 560,609 621,601 661,595 714,588 807,580 857,573 893,565 946,555 1000,544 1060,534 1200,505 1331,479 1380,468 1380,520 1222,546 1060,572 1000,582 929,593 857,603 807,608 750,612 661,620 571,630 500,635 464,637 393,637 321,640 275,645 179,653 71,664 28,669' });
  add(g, 'polygon', { fill: 'rgba(255,0,0,.11)', points: '179,681 250,673 357,667 480,663 560,660 589,657 679,649 807,640 857,635 964,623 1060,612 1200,593 1380,567 1380,609 1200,629 1060,642 964,653 857,662 807,665 714,669 600,681' });
  rect(g, 622, 507, 189, 30, 'rgba(255,120,30,.15)');
  rect(g, 622, 537, 189, 29, 'rgba(60,60,220,.17)');
  rect(g, 1163, 359, 44, 36, 'rgba(60,60,220,.17)');
  rect(g, 1163, 395, 44, 46, 'rgba(0,255,0,.1)');
  rect(g, 1274, 418, FAR, 57, 'rgba(60,60,220,.17)');
  rect(g, 1224.5, 213.5, 171, 68, 'rgba(255,0,0,.16)', { stroke: '#e01010' });

  cloud(g, EMA, SIGNAL, 'rgba(0,150,0,.16)', 'rgba(255,0,0,.16)', 28, 1377);
  poly(g, SIGNAL, '#900c0c', 2, { 'stroke-dasharray': '5 4' });
  coloured(g, EMA, (p, q) => {
    const slope = (q[1] - p[1]) / (q[0] - p[0]);
    if (slope < 0) return slope < -1.2 ? '#00d800' : '#0a8f0a';
    return slope > 1.2 && p[0] < 1190 ? '#f00000' : '#860808';
  }, 4, { 'stroke-linejoin': 'round' });
  [
    ['#000090', pts('a', '78,688 145,640 210,588 290,520 360,455 430,405 500,358 560,328 640,285 740,258 845,238')],
    ['#8f6400', pts('a', '845,238 930,255 1010,290 1085,322 1130,355 1180,393 1250,435 1310,475 1380,520 1420,537 1465,540')],
    ['#f02020', pts('a', '1465,540 1490,539')],
    ['#000090', pts('b', '95,598 140,593 200,570 260,530 340,470 400,420 450,385 500,340 560,295 600,275 640,258 700,240 760,234')],
    ['#8f6400', pts('b', '760,234 815,240')],
    ['#f02020', pts('b', '820,240 845,241')],
    ['#000090', pts('b', '860,239 920,236 1000,215 1060,190').concat(pts('c', '180,740 240,685 300,635 370,572 430,528 490,502 540,490 600,475 660,466'))],
    ['#8f6400', pts('c', '670,467 770,469')],
    ['#000090', pts('c', '845,468 900,455 950,425 1000,388 1060,370 1130,345 1200,315 1280,278 1340,250 1400,235 1450,222 1505,198')]
  ].forEach(([color, list]) => poly(g, list, color, 4, { 'stroke-dasharray': '7 6' }));

  // levels
  hline(g, 97.5, 27, 1057, '#a9b8f8', 1, '6 4');
  hline(g, 116.5, 694, 1516, '#ff8040', 1, '6 3');
  hline(g, 232.5, 27, 1702, '#0000e0', 1, '1 3');
  hline(g, 242.5, 27, 1056, '#ff8040', 1, '6 4');
  hline(g, 268.5, 694, 1516, '#0000e0', 1, '1 3');
  hline(g, 476.5, 27, 1057, '#0000e0', 1, '1 3');
  hline(g, 643.5, 27, 480, '#f08060', 1, '1 2');
  hline(g, 653.5, 346, FAR, '#28a428', 1, '6 4');
  hline(g, 507.5, 622, 811, '#28b428', 1, '6 3');
  hline(g, 536.5, 622, 811, '#ff8040', 1, '2 2');
  hline(g, 565.5, 622, 811, '#2020d0', 1, '20 8');
  hline(g, 358.5, 1163, 1207, '#ff8040', 1, '2 2');
  hline(g, 394.5, 1163, 1207, '#2020d0', 1, '20 8');
  hline(g, 440.5, 1163, 1207, '#60f060', 1, '20 8');
  hline(g, 417.5, 1274, FAR, '#f08060', 1, '1 2');
  hline(g, 474.5, 1274, FAR, '#2020d0', 1, '20 8');
  hline(g, 212, 27, FAR, '#32b432', 4);
  hline(g, 398, 887, FAR, '#32b432', 2);
  line(g, 1152, 200, 1879, 257, '#32b432');
  line(g, 1269, 306, 1603, 24, '#32b432', '6 4');
  line(g, 313, 595, 396, 618, '#149014');

  const red = '#c01818';
  poly(g, pts('a', '78,437 136,345 165,305'), red, 1);
  poly(g, pts('a', '292,248 430,197'), red, 1);
  poly(g, pts('b', '55,428 176,290 270,208 385,155 548,154 607,118'), red, 1);
  poly(g, pts('b', '900,80 1000,0 1040,-35 1055,-50 1137,-235 1155,-255'), red, 1);
  poly(g, pts('c', '905,122 954,103'), red, 1);
  poly(g, pts('c', '1415,20 1470,15'), red, 1);

  let week = 0;
  WEEKS.forEach(([block, str]) => {
    const y0 = BLOCKS[block][1];
    str.split(' ').forEach(s => {
      const x = Math.round(FIRST + STEP * week++ - .5) + .5;
      const [top, bottom, high, low] = s.slice(1).split(',').map(v => Math.round(y0 + v / 3) + .5);
      add(g, 'line', { x1: x, x2: x, y1: high, y2: low, stroke: '#000', 'shape-rendering': 'crispEdges' });
      rect(g, x - 2, top, 4, Math.max(bottom - top, 1), CANDLE[s[0]], { stroke: '#000', 'shape-rendering': 'crispEdges' });
    });
  });

  line(g, 1493, 216, 1764, 393, '#000', '2 4', 2);
  add(g, 'path', { d: 'M1775 401L1763 400L1769 391Z' });

  // fibonacci captions
  [[254, 640, '50,00 %', '#f08060'], [715, 504, '38,20 %', '#28a428'], [715, 533, '50,00 %', '#f08040'], [715, 562, '61,80 %', '#2828c8'],
    [1186, 355, '50,00 %', '#f08040'], [1184, 391, '61,80 %', '#2828c8'], [1185, 437, '76,40 %', '#60dc60'],
    [1577, 414, '50,00 %', '#f08060'], [1577, 471, '61,80 %', '#2828c8'], [46, 209, '5.522,4', '#28a428']]
    .forEach(([x, y, t, c]) => add(g, 'text', { class: 'fib', x, y, style: `fill:${c}` }, t));
  [[521, 82, '200,00 %', '#a9b8f8', '#8c9ce0'], [1083, 101, '161,80 %', '#ff8040', '#f08040'], [844, 217, '100,00 %', '#0000c0', '#0000c8'], [521, 227, '161,80 %', '#ff8040', '#f08040'],
    [1083, 253, '100,00 %', '#0000c0', '#0000c8'], [521, 461, '100,00 %', '#0000c0', '#0000c8']]
    .forEach(([x, y, t, border, c]) => {
      rect(g, x + .5, y + .5, 45, 15, '#fff', { stroke: border });
      add(g, 'text', { class: 'fib', x: x + 23, y: y + 12, style: `fill:${c}` }, t);
    });
  [[1386, 57, 39, 25, '(iii) ?', 1], [1396, 87, 21, 19, '5 ?'], [219, 397, 21, 24, '(i)', 1], [544, 636, 24, 24, '(ii)', 1], [714, 394, 15, 21, '1'], [802, 507, 15, 21, '2'],
    [1172, 183, 15, 21, '3'], [1205, 396, 15, 21, '4'], [1272, 281, 102, 21, 'INDECISION RANGE'], [1813, 426, 26, 24, '(iv)', 1]]
    .forEach(([x, y, w, h, t, big]) => {
      rect(g, x + .5, y + .5, w, h, 'rgba(255,255,255,.7)', { rx: 3, stroke: '#5a96ff' });
      add(g, 'text', { class: big ? 'note wave' : 'note', x: x + w / 2, y: y + h / 2 + 4 }, t);
    });

  axis('price-axis', 23, [
    ...rows.map((y, i) => [y, ((6400 - i * 200) / 1000).toFixed(3)]).filter(r => r[1] !== '5.600'),
    [196, '5.605,6', '#00a800', 1], [210, '5.536,2', '#b00000', 1], [245, '5.353,0', '#000098', 1]
  ]);
}

/* ---------- trains ---------- */
const THICK = series({
  d: '22,60 100,48 200,50 300,48 440,50 500,68 550,48 590,45 620,82 650,88 680,68 710,62 760,92 800,98 825,140 850,157 865,140 880,125 920,135 950,180 990,222 1010,205 1040,207 1060,240 1085,262 1100,262 1130,258 1150,225 1180,195 1200,197 1235,245 1270,258 1300,280 1330,260 1360,215 1400,150 1430,140 1460,148 1485,168 1500,155 1535,105',
  e: '0,100 50,75 95,72 140,98 165,75 190,45 240,47 280,57 320,57 340,62 380,58 410,62 440,45 490,82 520,90 560,88 620,108 655,130 680,118 710,85 750,50 810,60 850,65 890,48 910,45 980,48 1020,45 1045,58 1100,73 1150,53 1185,58 1235,90 1265,75 1300,92 1330,127 1350,127 1385,92 1430,108 1435,104',
  f: '0,85 45,68 80,78 120,105 160,115 180,92 205,85 240,95 275,70 310,48 400,55 435,70 460,125 490,152 540,105 580,85 610,85 650,102 675,102 720,90 740,103 780,95 785,72 835,90 855,80 885,57 940,60 950,52 985,58'
});
const FAST = series({
  d: '22,90 50,60 140,58 165,72 180,60 250,70 270,95 295,105 315,152 330,157 345,145 370,75 400,68 435,90 465,145 485,187 497,188 512,175 545,75 570,45 590,45 620,180 640,210 653,210 675,155 700,120 725,115 760,190 795,238 838,240 870,170 895,138 945,140 985,215 1000,200 1015,160 1040,155 1065,210 1095,238 1130,220 1175,80 1190,68 1208,88 1240,200 1270,245 1300,265 1318,258 1360,95 1380,50 1425,45 1460,105 1490,168 1503,158 1530,70 1538,55',
  e: '0,50 60,65 110,85 142,190 155,170 190,60 205,45 260,80 280,90 310,120 325,155 340,150 350,155 375,118 390,165 420,130 440,75 470,140 490,215 520,230 555,218 570,230 590,243 630,228 655,270 670,258 700,110 740,45 775,43 820,90 855,145 870,130 905,52 920,55 1040,58 1070,165 1100,182 1118,160 1125,130 1155,95 1190,110 1205,170 1235,235 1250,215 1265,160 1285,158 1305,195 1320,255 1332,245 1355,205 1370,130 1385,105 1430,128',
  f: '0,95 20,85 55,88 90,130 115,205 145,240 160,232 195,135 210,115 225,118 243,142 260,130 290,70 325,65 390,70 425,100 455,190 475,225 490,225 505,205 525,140 555,85 620,67 655,165 675,190 687,182 705,165 720,135 740,185 755,182 775,155 790,80 805,78 835,140 852,130 885,60 920,95 935,97 952,88 968,75 985,105'
});

function drawTrains() {
  const g = layer('trains', 681);
  grid(g, [705, 722, 738, 755], 681, 776);
  rect(g, 27, 689, LAST - 27, 17, 'rgba(0,200,0,.15)');
  rect(g, 27, 756, LAST - 27, 17, 'rgba(255,0,0,.15)');
  const clampTop = THICK.map(([x, y]) => [x, Math.min(y, 705)]);
  const base = [[27, 705], [LAST, 705]];
  cloud(g, clampTop, base, 'rgba(0,110,0,.42)', 'none', 27, LAST);
  const clampLow = THICK.map(([x, y]) => [x, Math.max(y, 755)]);
  cloud(g, [[27, 755], [LAST, 755]], clampLow, 'rgba(120,0,0,.4)', 'none', 27, LAST);
  const slow = THICK.map(([x, y]) => [x + 9, y]).filter(p => p[0] <= LAST);
  const lag = FAST.map(([x, y]) => [x + 3, y]).filter(p => p[0] <= LAST);
  cloud(g, THICK, slow, 'rgba(30,30,160,.25)', 'rgba(210,60,200,.3)', 27, LAST);
  cloud(g, FAST, lag, 'rgba(0,160,0,.2)', 'rgba(255,60,60,.3)', 27, LAST);
  hline(g, 730.5, 27, LAST, '#0000a0', 2, '6 4');
  [688.5, 705.5, 755.5, 772.5].forEach(y => hline(g, y, 27, LAST, '#000'));
  poly(g, slow, '#1c1c1c', 3, { 'stroke-dasharray': '7 6' });
  coloured(g, THICK, (p, q) => q[1] < p[1] ? '#000096' : '#ff0000', 4, { 'stroke-linejoin': 'round' });
  poly(g, lag, '#222', 1, { 'stroke-dasharray': '3 3' });
  coloured(g, FAST, (p, q) => q[1] < p[1] ? '#000' : '#e02020', 1.5);
  triangles(g, 'd', -1, '#b40000', 5, '590,47 405,73 728,118 822,235 900,142 945,142 1040,155 1112,232 1208,88 1427,45');
  triangles(g, 'd', 1, '#0000b4', 5, '36,88 170,72 220,62 330,155 497,187 653,208 805,235 838,240 915,145 1010,205 1100,235 1132,222 1318,258 1503,158');
  triangles(g, 'e', -1, '#b40000', 5, '12,55 60,60 110,85 210,45 355,150 390,143 423,130 457,95 572,232 637,237 773,45 920,57 985,50 1035,57 1168,100 1285,162 1400,112 1495,92');
  triangles(g, 'e', 1, '#0000b4', 5, '45,65 90,75 155,172 340,150 373,140 405,150 440,105 538,230 590,243 670,258 870,132 937,57 968,57 1018,57 1118,163 1252,217 1332,245 1450,112');
  triangles(g, 'f', -1, '#b40000', 5, '57,93 225,118 325,65 357,65 622,72 740,162 805,82 905,77 968,80');
  triangles(g, 'f', 1, '#0000b4', 5, '10,110 160,233 260,135 342,65 505,205 687,183 755,183 852,135 952,88');
  axis('trains-axis', 681, [[688, '100', '#111', 1], [738, '40'], [694, '91,951', '#f00000', 1], [707, '77,297', '#222', 1], [715, '73,673', '#d02020', 1], [730, '50', '#0000b0', 1], [755, '20', '#111', 1], [769, '0', '#111', 1]]);
}

/* ---------- willy ---------- */
const WILLY = series({
  d: '22,330 100,325 170,335 230,322 240,340 270,335 310,350 345,332 370,328 395,348 425,338 460,358 468,350 485,378 497,378 515,345 550,328 580,330 590,345 605,420 622,422 637,392 655,415 668,378 690,378 715,370 730,410 755,448 795,470 808,468 823,535 845,460 860,430 885,440 910,450 945,470 962,493 972,485 992,488 1010,455 1025,460 1055,530 1070,515 1085,528 1100,517 1120,520 1132,502 1150,468 1165,468 1178,457 1195,475 1225,525 1242,500 1260,515 1270,540 1290,540 1305,525 1318,522 1360,440 1380,400 1392,385 1425,342 1440,358 1460,390 1475,386 1490,392 1503,330 1530,338',
  e: '0,338 40,340 60,333 78,350 92,330 125,375 140,362 158,332 205,330 260,345 275,332 320,348 340,333 358,350 375,330 390,358 405,335 440,332 460,370 475,375 490,405 520,388 540,402 555,388 575,420 605,435 625,485 640,530 655,540 670,465 690,440 708,390 755,330 780,350 805,352 822,375 855,370 872,332 900,335 920,330 955,330 975,335 1020,330 1050,362 1070,370 1085,355 1100,362 1120,338 1185,348 1203,378 1220,370 1235,372 1265,345 1285,378 1300,378 1320,420 1335,422 1355,390 1385,372 1395,430 1402,438 1415,410 1435,400',
  f: '0,385 10,350 25,368 60,368 80,390 110,435 155,437 165,415 175,378 195,378 210,420 225,403 245,405 275,335 300,342 340,335 365,347 395,338 405,352 430,358 440,378 458,480 490,455 510,400 535,380 560,358 575,375 605,355 625,390 640,395 660,380 675,385 690,368 720,370 740,405 755,368 785,345 805,370 820,375 845,358 885,333 905,362 920,332 960,342 985,350'
});

function drawWilly() {
  const g = layer('willy', 777);
  grid(g, [798, 813, 828, 843], 777, 861);
  const blue = 'rgba(80,80,240,.35)', red = 'rgba(255,60,60,.47)', dark = 'rgba(150,0,0,.6)', green = 'rgba(0,140,0,.6)';
  const put = (b, c, s) => bands(g, b, 777, 84, c, s);
  put('d', blue, '25-42 56-73 104-120 148-182 196-244 258-274 320-337 350-367 398-413 459-475 490-552 568-583 613-644 660-677 692-708 1386-1433 1464-1480 1495-1526 1541-1557');
  put('d', red, '769-801 815-831 907-969 983-1000 1014-1064 1078-1094 1109-1126 1184-1232 1246-1280');
  put('d', dark, '753-769 863-877 894-907');
  put('d', green, '846-863 877-894 1369-1386');
  put('e', blue, '0-36 51-69 84-102 117-168 183-201 264-282 333-351 366-384 399-450 465-483 498-531 546-564 714-765 795-813 828-846 861-879 894-912 927-963 978-1029 1077-1095 1110-1128 1176-1194 1209-1227 1260-1278 1293-1311 1341-1392 1425-1458 1473-1491');
  put('e', red, '630-663');
  put('e', dark, '612-630 1392-1410');
  put('e', green, '696-714 1410-1425');
  put('f', blue, '33-51 216-234 249-285 315-351 366-399 516-564 582-615 648-666 681-699 714-732 747-798 828-897 912-930');
  put('f', dark, '117-135 150-168 447-465');
  put('f', green, '135-150 168-186 498-516');

  cloud(g, WILLY.map(([x, y]) => [x, Math.min(y, 802)]), [[27, 802], [LAST, 802]], 'rgba(50,160,30,.45)', 'none', 27, LAST);
  cloud(g, [[27, 839], [LAST, 839]], WILLY.map(([x, y]) => [x, Math.max(y, 839)]), 'rgba(110,0,0,.45)', 'none', 27, LAST);
  hline(g, 783.5, 27, LAST, '#000', 1, '6 4');
  hline(g, 857.5, 27, LAST, '#000', 1, '6 4');
  hline(g, 802.5, 27, LAST, '#000090', 2);
  hline(g, 820.5, 27, LAST, '#000090', 2, '6 4');
  hline(g, 839.5, 27, LAST, '#c80000', 2);
  coloured(g, WILLY, (p, q) => {
    const mid = (p[1] + q[1]) / 2;
    if (mid < 802) return '#00c800';
    if (mid > 840) return '#900000';
    return q[1] < p[1] ? '#0000c8' : '#ff9600';
  }, 4, { 'stroke-linejoin': 'round' });
  triangles(g, 'd', -1, '#b40000', 6, '747,435 850,435 887,435');
  triangles(g, 'd', 1, '#0000b4', 6, '836,438 870,438 1365,440');
  triangles(g, 'e', -1, '#b40000', 6, '605,435 1383,435');
  triangles(g, 'e', 1, '#0000b4', 6, '690,440 1403,440');
  triangles(g, 'f', -1, '#b40000', 6, '110,435 145,435 440,435');
  triangles(g, 'f', 1, '#0000b4', 6, '125,438 162,438 492,440');
  axis('willy-axis', 777, [[783, '0', '#111', 1], [791, '-9,8220', '#00b400', 1], [812, '-40'], [828, '-60'], [803, '-25', '#0000a0', 1], [820, '-50', '#0000a0', 1], [839, '-75', '#c80000', 1], [854, '-100', '#222', 1]]);
}

/* ---------- awesome ---------- */
const AO_FAST = series({
  d: '22,648 50,630 110,615 135,625 165,632 230,640 270,658 320,672 345,671 380,655 430,662 460,675 500,692 530,680 575,643 600,655 625,693 665,685 710,678 760,700 810,715 840,782 875,725 930,721 945,738 985,736 1030,700 1060,738 1130,725 1165,668 1190,660 1220,690 1265,720 1300,738 1330,725 1360,665 1390,620 1425,605 1460,630 1495,648 1530,605',
  e: '0,602 40,605 110,630 145,665 180,638 210,633 270,658 330,672 380,677 410,685 440,669 460,668 510,700 540,690 610,712 655,732 690,700 730,650 780,625 820,632 865,645 900,620 950,600 1020,597 1050,620 1085,648 1140,645 1190,665 1225,695 1260,682 1290,690 1335,738 1385,690 1435,685',
  f: '0,665 60,660 110,685 160,700 195,672 240,682 270,660 310,618 360,590 410,600 440,630 475,738 495,740 540,675 570,658 620,655 650,680 710,665 755,685 790,662 830,670 870,660 895,640 930,642 960,640 985,643'
});
const AO_SLOW = series({
  d: '22,632 60,622 110,605 200,613 245,612 300,625 350,640 430,635 470,642 530,668 590,645 620,650 670,672 730,665 770,672 810,700 850,740 880,745 930,725 970,742 1010,748 1065,742 1120,765 1160,745 1210,700 1240,705 1290,728 1345,725 1390,690 1430,635 1465,630 1495,635 1530,625',
  e: '0,625 30,600 60,595 110,597 150,617 185,620 230,605 270,612 320,637 380,655 470,658 540,682 610,697 665,715 690,710 740,680 780,650 840,640 870,645 920,630 985,590 1040,578 1070,587 1110,605 1190,615 1240,643 1310,665 1370,702 1410,695',
  f: '0,690 80,678 110,682 165,702 240,685 290,665 350,612 405,595 440,602 470,640 510,690 540,685 575,655 610,633 650,640 710,658 770,665 830,668 870,665 915,645 950,632 985,625'
});

function drawAwesome() {
  const g = layer('awesome', 862);
  grid(g, [870, 935], 862, 939);
  const zero = 902;
  for (let i = 0; i < 245; i++) {
    const x = FIRST + STEP * i, y = at(AO_FAST, x), s = at(AO_SLOW, x), up = y < at(AO_FAST, x - STEP);
    const color = y < zero ? (up ? '#0000e6' : '#f000e6') : (up ? '#008c8c' : '#f00000');
    rect(g, x - 2, Math.min(y, s), 1, Math.abs(y - s), s < y ? '#fbbcbc' : '#b4f0b4');
    rect(g, x + 1, Math.min(y, s), 1, Math.abs(y - s), s < y ? '#fbbcbc' : '#b4f0b4');
    rect(g, Math.round(x) - 2, Math.min(y, zero), 4, Math.abs(y - zero), color);
  }
  hline(g, 902.5, 27, LAST, '#1414e6', 2);
  coloured(g, AO_FAST, (p, q) => q[1] < p[1] ? '#000032' : '#b400b4', 4, { 'stroke-linejoin': 'round' });
  coloured(g, AO_SLOW, (p, q) => q[1] < p[1] ? '#64ff64' : '#ff9600', 4, { 'stroke-linejoin': 'round' });
  const cyan = '#00f0f0', yellow = '#fff000';
  triangles(g, 'd', 1, cyan, 6, '545,668 685,670 872,738 945,732 978,742 1257,700 1333,718 1520,617');
  triangles(g, 'd', -1, yellow, 6, '607,660 730,672 933,723 962,738 1240,703 1290,730 1472,637');
  triangles(g, 'e', 1, cyan, 6, '690,702 855,648 1387,688 1453,680');
  triangles(g, 'e', -1, yellow, 6, '27,603 838,640 987,597 1418,705');
  triangles(g, 'f', 1, cyan, 6, '163,702 277,660 527,692 790,653 873,660 940,637');
  triangles(g, 'f', -1, yellow, 6, '110,685 243,685 407,600 575,657 822,670 918,645 955,632');
  axis('awesome-axis', 862, [[869, '500'], [877, '295,11', '#10e010', 1], [883, '295,11', '#60e060', 1], [889, '208,06', '#f010e0', 1], [902, '0', '#f010e0', 1], [908, '0', '#f010e0', 1], [933, '-500']]);
}

/* ---------- force ---------- */
const FORCE = series({
  d: '22,920 60,928 110,933 150,942 190,928 220,937 290,943 345,932 400,936 440,940 500,912 540,912 590,925 620,895 665,887 730,900 795,888 820,850 850,803 870,807 905,828 935,848 1000,855 1030,865 1060,863 1110,872 1160,885 1210,903 1260,895 1320,880 1390,881 1450,908 1520,905',
  e: '0,910 50,920 110,925 150,898 180,902 240,925 270,935 310,933 340,938 400,918 470,908 500,908 550,915 640,925 700,920 770,935 830,955 870,947 980,943 1030,942 1110,920 1160,925 1220,915 1275,914 1320,885 1350,875 1400,885 1430,883',
  f: '0,885 30,888 80,895 200,900 250,915 300,905 340,887 430,883 465,825 510,803 550,825 600,855 660,875 730,895 750,885 780,888 830,905 880,922 920,912 960,922 985,920'
});

function drawForce() {
  const g = layer('force', 940);
  grid(g, [949, 981], 940, 995);
  const yellow = '#fffc80', cyan = '#aeeefc', green = '#3cff3c', purple = '#6a68c0', maroon = '#640000';
  const put = (b, c, s) => bands(g, b, 940, 56, c, s);
  put('d', yellow, '20-613');
  put('d', cyan, '521-538 660-1557');
  put('d', green, '25-42 151-196 291-305 322-353 384-398 459-507 599-613');
  put('d', purple, '630-678 739-863 969-986 1030-1064 1218-1355 1372-1386 1450-1481 1495-1526');
  put('d', maroon, '507-521 613-630');
  put('e', cyan, '0-18 168-201 498-531 1359-1500');
  put('e', yellow, '18-135 201-450 531-1278');
  put('e', green, '102-135 282-315 351-417 432-450 630-648 663-681 696-714 864-879 912-945 963-996 1029-1128 1179-1227 1245-1278');
  put('e', purple, '150-168 465-498 1293-1359 1392-1410 1443-1476');
  put('e', maroon, '135-150 450-465 1278-1293');
  put('f', cyan, '0-252 351-846');
  put('f', yellow, '252-267 846-978');
  put('f', green, '879-912 978-993');
  put('f', purple, '3-36 84-135 168-186 285-351 384-531 732-780');
  put('f', maroon, '267-285 912-930');
  hline(g, 981.5, 27, LAST, '#000');
  for (let i = 0; i < 245; i++) {
    const x = Math.round(FIRST + STEP * i), y = Math.round(at(FORCE, x));
    const up = y < at(FORCE, x - STEP) - .05;
    rect(g, x - 3, y, 6, 996 - y, up ? 'rgba(20,20,190,.8)' : 'rgba(205,20,20,.72)');
    rect(g, x, y + 2, 2, 996 - y, up ? 'rgba(110,110,255,.4)' : 'rgba(255,170,150,.5)');
  }
  axis('force-axis', 940, [[949, '1'], [975, '0,5000', '#111', 1], [988, '0,4694', '#0000e0', 1]]);
}

function drawMonths() {
  const g = layer('months', 996);
  MONTHS.forEach(([x, name]) => {
    line(g, x + .5, 996, x + .5, 999, '#7c8f99');
    add(g, 'text', { class: 'fib', x, y: 1008 }, name);
  });
}

/* ---------- tool column ---------- */
const use = (id, x, y, s) => `<use href="#${id}" x="${x}" y="${y}" width="${s}" height="${s}"/>`;
const corners = use('plus', 0, 14, 5) + use('plus', 15, 1, 5);
const oval = (stroke, fill) => `<ellipse cx="10" cy="10" rx="8" ry="6" fill="${fill}" stroke="${stroke}" stroke-width="1.300"/>${corners}`;
const stroke = (d, color, w) => `<path d="${d}" fill="none" stroke="${color}" stroke-width="${w || 1.6}"/>`;
const TOOLS = [
  ['Cursor', '<path d="M6 3L15 11L11 11L13.500 16L11.500 17L9 12L6 15Z" fill="#dfe9ee" stroke="#4a5a62"/>'],
  ['Zoom', use('glass', 3, 2, 15)],
  ['Zoom área', use('glass', 5, 1, 15) + '<path d="M1 6H12V16H1Z" fill="none" stroke="#1464c8" stroke-dasharray="2 1"/>'],
  ['Alarma en objeto', use('bell', 0, 4, 15) + stroke('M1 4H19', '#111') + stroke('M10 7L18 0M11 1L16 6', '#0000e0', 1) + '<path d="M13 6L19 12H16L17 16L13 13Z" fill="#fff" stroke="#556"/>'],
  ['Alarma', use('bell', 2, 2, 16) + stroke('M2 4Q0 6 2 9M18 4Q20 6 18 9', '#667', 1)],
  ['Fibonacci', stroke('M2 12L5 4L9 12H19', '#111', 1.3) + stroke('M8 6H19', '#f08050', 1) + stroke('M15 18V12H19M15 15H18', '#0000e0', 1.7) + use('plus', 0, 11, 5)],
  ['Niveles Fibonacci', stroke('M4 5H19', '#f08050', 1) + stroke('M4 9H15', '#2050d0', 1) + stroke('M14 17V11H19M14 14H18', '#0000e0', 1.7)],
  ['Rectángulo azul', '<rect x="3" y="5" width="13" height="10" fill="none" stroke="#5a96ff" stroke-width="1.500"/>' + corners],
  ['Rectángulo rojo', '<rect x="3" y="5" width="14" height="10" fill="#c07080" stroke="#f02020" stroke-width="1.500"/>' + corners],
  ['Flecha', stroke('M5 15L14 7', '#111', 2) + '<path d="M18 3L16 11L10 5Z"/><circle cx="4" cy="16" r="2" fill="none" stroke="#111"/>'],
  ['Texto', '<rect x="2" y="2" width="16" height="16" rx="2" fill="none" stroke="#5a96ff"/>' + stroke('M6 6H14M10 6V15', '#111', 2)],
  ['Globo', '<circle cx="10" cy="9" r="8" fill="none" stroke="#5a96ff"/>' + stroke('M13 17L17 20V14', '#5a96ff', 1) + stroke('M6.500 5.500H13.500M10 5.500V13', '#107818', 2)],
  ['Segmento', stroke('M5 15L15 5', '#111', 1.4) + '<circle cx="4" cy="16" r="2" fill="none" stroke="#111"/><circle cx="16" cy="4" r="2" fill="none" stroke="#111"/>'],
  ['Horizontal verde', stroke('M9 10H20', '#32b432', 2) + '<circle cx="7" cy="10" r="1.500" fill="none" stroke="#32b432"/>'],
  ['Horizontal roja', stroke('M9 10H20', '#f00000', 2) + '<circle cx="7" cy="10" r="1.500" fill="none" stroke="#f00000"/>'],
  ['Regla', '<path d="M1 15L14 2L18 6L5 19Z" fill="#a9bac4" stroke="#46606e"/>' + stroke('M5 12L7 14M8 9L10 11M11 6L13 8', '#46606e', 1)],
  ['Canal', '<path d="M1 2H19V10H1Z" fill="#78b08c"/><path d="M1 10H19V18H1Z" fill="#b0848e"/>' + stroke('M1 15L6 8L9 13L18 3M14 3H18V7', '#b8c4ff', 1.3)],
  ['Elipse roja', oval('#f02020', '#b08892')],
  ['Elipse marrón', oval('#805020', '#93999a')],
  ['Elipse verde', oval('#108020', '#7a9f98')],
  ['Elipse lima', oval('#20f020', '#92cba8')],
  ['Línea negra', stroke('M1 18L19 1', '#222', 1.3)],
  ['Línea verde', stroke('M1 18L19 1', '#32b432')],
  ['Línea roja', stroke('M1 18L19 1', '#f00000')],
  ...[['#222', 1.3], ['#f09080', 2], ['#10f010', 2], ['#108010', 2], ['#f01010', 2], ['#6090ff', 2], ['#1010a0', 2]].map(([c, w], i) => ['Nivel ' + (i + 1), stroke('M0 10H20', c, w)]),
  ['Vertical', stroke('M10 1V19', '#222', 1.3)],
  ['Ángulo', stroke('M16 3L2 16H19', '#e06060', 1.3) + stroke('M7 11L12 16M9 8L12 15', '#0000e0', 1.5) + '<circle cx="16" cy="9" r="2" fill="none" stroke="#0000e0"/>'],
  ['Ciclo', '<circle cx="10" cy="10" r="7" fill="none" stroke="#e08060"/>' + use('plus', 6, 9, 5) + use('plus', 11, 6, 5)],
  ['Elliott', stroke('M1 7L5 13L8 5L12 15L16 3', '#5a96ff', 1) + use('plus', 0, 4, 5) + use('plus', 3, 12, 5) + use('plus', 7, 3, 5) + use('plus', 11, 13, 5) + use('plus', 14, 1, 5)],
  ['ABC', stroke('M2 3L7 12L12 5L17 15', '#5a96ff', 1) + use('plus', 3, 11, 5) + use('plus', 10, 3, 5) + use('plus', 14, 14, 5)],
  ['Correcto', '<path d="M2 11L6 9L9 12L17 2L19 4L9 18Z" fill="#32c832" stroke="#148014"/>'],
  ['Bien', '<path d="M2 9H7L11 2Q14 3 12 8H18V17H2Z" fill="#32c832" stroke="#148014"/>'],
  ['Mal', '<path d="M2 5L5 2L10 7L15 2L18 5L13 10L18 15L15 18L10 13L5 18L2 15L7 10Z" fill="#f01414" stroke="#a00"/>'],
  ['Aviso', '<path d="M10 1L19 18H1Z" fill="#ffb43c" stroke="#c87814"/><path d="M10 6V12M10 14V16" stroke="#222" stroke-width="2"/>'],
  ['Flecha verde', '<path d="M10 3L17 11H13V18H7V11H3Z" fill="#149614" stroke="#0a640a"/>'],
  ['Flecha roja', '<path d="M7 3H13V10H17L10 18L3 10H7Z" fill="#e01414"/>']
];

document.getElementById('tools').innerHTML = TOOLS
  .map(([name, art]) => `<button class="tool" aria-label="${name}"><svg viewBox="0 0 20 20">${art}</svg></button>`).join('');

drawPrice();
drawTrains();
drawWilly();
drawAwesome();
drawForce();
drawMonths();
```
